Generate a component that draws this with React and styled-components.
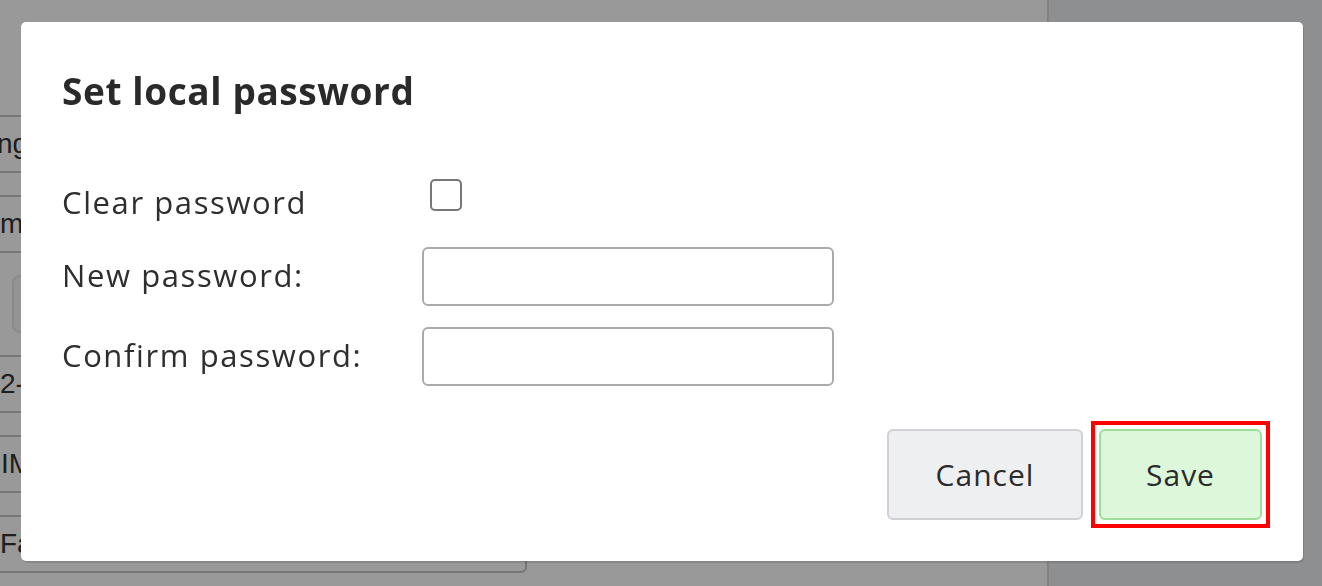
import styled, { createGlobalStyle } from "styled-components";

const Global = createGlobalStyle`
  html, body { margin: 0; padding: 0; }
  body {
    width: 1322px;
    height: 586px;
    overflow: hidden;
    font-family: "Open Sans", "Noto Sans", sans-serif;
    background: #fff;
  }
`;

////////////////////////////////////////////////
// page behind the overlay
const Page = styled.div`
  display: flex;
  height: 586px;
`;

const LeftPane = styled.div`
  width: 1047px;
  background: #fff;
  overflow: hidden;
`;

const FieldList = styled.div`
  display: flex;
  flex-direction: column;
  gap: 22px;
  padding-top: 115px;
  margin-left: -70px;
`;

const Field = styled.div`
  box-sizing: border-box;
  width: 597px;
  height: 58px;
  border: 2px solid #c4c4c4;
  border-radius: 6px;
  display: flex;
  align-items: center;
  padding-left: ${(p) => 68 + (p.$indent || 0)}px;
  font-family: "Liberation Sans", Arial, sans-serif;
  font-size: 28px;
  color: #333;
  white-space: nowrap;
`;

const GhostButton = styled.div`
  box-sizing: border-box;
  margin-left: 82px;
  width: 200px;
  height: 58px;
  border: 2px solid #e6e6e6;
  border-radius: 8px;
  background: #f7f7f7;
`;

const RightPane = styled.div`
  flex: 1;
  background: #eceef1;
  border-left: 2px solid #d9d9d9;
`;

////////////////////////////////////////////////
// dialog
const Overlay = styled.div`
  position: fixed;
  inset: 0;
  background: rgba(0, 0, 0, 0.4);
  display: flex;
  align-items: center;
  justify-content: center;
`;

const Dialog = styled.div`
  box-sizing: border-box;
  width: 1282px;
  margin-left: 2px;
  margin-top: -3px;
  background: #fff;
  border-radius: 5px;
  box-shadow: 1px 2px 1px rgba(0, 0, 0, 0.12);
  padding: 47px 41px 41px 41px;
  display: flex;
  flex-direction: column;
  color: #2b2b2b;
`;

const Title = styled.h2`
  margin: 0;
  font-size: 37px;
  line-height: 44px;
  font-weight: 700;
  letter-spacing: 0.6px;
  color: #2a2a2a;
`;

const Form = styled.div`
  display: grid;
  grid-template-columns: 360px 412px;
  grid-auto-rows: 59px;
  row-gap: 21px;
  margin-top: 54px;
  align-items: center;
`;

const Label = styled.label`
  font-size: 31px;
  letter-spacing: 1.6px;
  color: #2e2e2e;
  position: relative;
  top: ${(p) => p.$shift || 0}px;
`;

const Checkbox = styled.input.attrs({ type: "checkbox" })`
  appearance: none;
  margin: 0 0 0 8px;
  width: 32px;
  height: 32px;
  box-sizing: border-box;
  border: 2px solid #777;
  border-radius: 5px;
  background: #fff;
  position: relative;
  top: 1px;
`;

const TextInput = styled.input.attrs({ type: "password" })`
  box-sizing: border-box;
  width: 412px;
  height: 59px;
  margin: 0;
  border: 2px solid #aaa;
  border-radius: 6px;
  background: #fff;
  font-size: 28px;
  padding: 0 12px;
  outline: none;
`;

const Footer = styled.div`
  display: flex;
  justify-content: flex-end;
  gap: 16px;
  margin-top: 43px;
`;

const Button = styled.button`
  position: relative;
  box-sizing: border-box;
  height: 91px;
  min-width: ${(p) => p.$w}px;
  padding: 0 20px;
  border-radius: 6px;
  font-family: inherit;
  font-size: 30px;
  letter-spacing: 1px;
  color: #2b2b2b;
  cursor: pointer;
  background: ${(p) => (p.$primary ? "#dcf7da" : "#eeeff1")};
  border: 2px solid ${(p) => (p.$primary ? "#9ddf9a" : "#cfd1d4")};
  outline: none;

  &::after {
    content: "";
    display: ${(p) => (p.$focused ? "block" : "none")};
    position: absolute;
    inset: -10px;
    border: 4px solid #ff0000;
    pointer-events: none;
  }
`;

let App = function () {
  return (
    <>
      <Global />
      <Page>
        <LeftPane>
          <FieldList>
            <Field $indent={-3}>ng name</Field>
            <Field>main</Field>
            <GhostButton />
            <Field>2-0</Field>
            <Field $indent={1}>IMEI</Field>
            <Field>Fast</Field>
          </FieldList>
        </LeftPane>
        <RightPane />
      </Page>

      <Overlay>
        <Dialog>
          <Title>Set local password</Title>
          <Form>
            <Label $shift={5}>Clear password</Label>
            <div>
              <Checkbox />
            </div>
            <Label $shift={-2}>New password:</Label>
            <TextInput />
            <Label $shift={-2}>Confirm password:</Label>
            <TextInput />
          </Form>
          <Footer>
            <Button $w={196}>Cancel</Button>
            <Button $w={163} $primary $focused>
              Save
            </Button>
          </Footer>
        </Dialog>
      </Overlay>
    </>
  );
};

export default App;
